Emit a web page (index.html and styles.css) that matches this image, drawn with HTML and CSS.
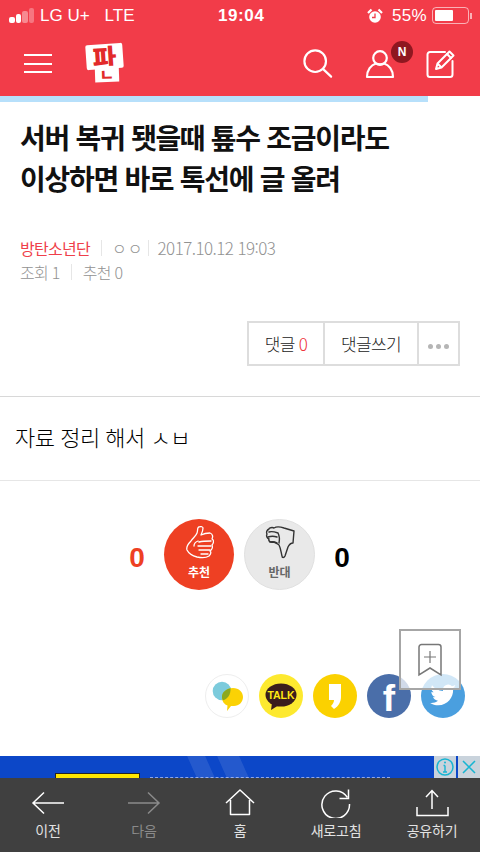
FILE: index.html
```html
<!DOCTYPE html>
<html lang="ko">
<head>
<meta charset="utf-8">
<title>판</title>
<link rel="stylesheet" href="styles.css">
</head>
<body>
<div class="page">
  <header class="header">
    <div class="status">
      <div class="status-left">
        <span class="signal"><i class="bar b1"></i><i class="bar b2"></i><i class="bar b3"></i><i class="bar b4"></i></span>
        <span class="carrier">LG U+</span>
        <span class="lte">LTE</span>
      </div>
      <div class="clock">19:04</div>
      <div class="status-right">
        <svg class="alarm" width="16" height="16" viewBox="0 0 16 16"><circle cx="8" cy="9" r="5.800" fill="#fff"/><path d="M8 5.500V9.500H5" fill="none" stroke="#f23c49" stroke-width="1.300"/><path d="M1 5 4.500 1.500M15 5l-3.500-3.500" stroke="#fff" stroke-width="2.200"/></svg>
        <span class="pct">55%</span>
        <span class="battery"><i class="level"></i></span>
        <i class="nub"></i>
      </div>
    </div>
    <div class="nav">
      <div class="nav-left">
        <div class="burger"><i></i><i></i><i></i></div>
        <div class="logo">
          <span class="logo-top">파</span>
          <span class="logo-bot">ㄴ</span>
        </div>
      </div>
      <div class="nav-right">
        <svg class="ic-search" width="30" height="30" viewBox="0 0 32 32" fill="none" stroke="#fff" stroke-width="2.300" stroke-linecap="round"><circle cx="13" cy="13" r="11.500"/><path d="M21.500 21.500l8.500 8"/></svg>
        <div class="user">
          <svg width="30" height="30" viewBox="0 0 30 30" fill="none" stroke="#fff" stroke-width="2.200" stroke-linejoin="round"><circle cx="15" cy="9" r="6.800"/><path d="M2 28c0-7 4-12 9-13.500 2.500 1 5.500 1 8 0 5 1.500 9 6.500 9 13.500z"/></svg>
          <span class="badge">N</span>
        </div>
        <svg class="ic-edit" width="30" height="30" viewBox="0 0 30 30" fill="none" stroke="#fff" stroke-width="2" stroke-linejoin="round" stroke-linecap="round"><path d="M19 3H4a2.500 2.500 0 0 0-2.500 2.500v20A2.500 2.500 0 0 0 4 28h20a2.500 2.500 0 0 0 2.500-2.500V12"/><path d="M10 20l1.500-5.500L23.500 2.500l4 4-12 12z"/><path d="M21 5l4 4M12 15l3 3"/></svg>
      </div>
    </div>
  </header>
  <div class="progress"><div class="progress-fill"></div></div>

  <main>
    <h1 class="title">서버 복귀 됏을때 툪수 조금이라도<br>이상하면 바로 톡선에 글 올려</h1>

    <div class="meta">
      <div class="meta-row">
        <span class="author">방탄소년단</span>
        <i class="sep"></i>
        <span class="nick">ㅇㅇ</span>
        <i class="sep"></i>
        <span class="date">2017.10.12 19:03</span>
      </div>
      <div class="meta-row">
        <span>조회 1</span>
        <i class="sep"></i>
        <span>추천 0</span>
      </div>
    </div>

    <div class="actions">
      <div class="btns">
        <div class="btn btn-reply">댓글 <em>0</em></div>
        <div class="btn btn-write">댓글쓰기</div>
        <div class="btn btn-more"><i></i><i></i><i></i></div>
      </div>
    </div>

    <div class="body-text">자료 정리 해서 ㅅㅂ</div>

    <div class="vote">
      <span class="count up">0</span>
      <div class="circle red">
        <svg width="30" height="33" viewBox="0 0 30 33" fill="none" stroke="#fff" stroke-width="1.300" stroke-linejoin="round" stroke-linecap="round"><path d="M15 1c-2 0-1 4-2 6-1 3-4 5-6 8-3 3-5 6-4 9 2 4 6 6 10 7 5 1 9 1 12-1 2-2 2-4 1-5 2-1 3-4 2-6 2-2 2-5 0-6 1-2 1-5-2-6-3 0-7 1-9 2 1-2 2-5 2-7 0-1-2-2-4-1z"/><path d="M14 15c-3 1-4 3-4 5M15 16c4-1 8-1 12-1M14 20c4 0 9 0 13 0M15 24h11M17 28h7"/></svg>
        <span class="circle-label">추천</span>
      </div>
      <div class="circle grey">
        <svg width="30" height="33" viewBox="0 0 30 33" fill="none" stroke="#333" stroke-width="1.400" stroke-linejoin="round" stroke-linecap="round"><path d="M9 2c3-2 7-1 10 0l10 3-1 12c-2 0-4 2-5 4l-3 9c-1 2-3 2-3 0-1-4-1-7-3-11-3-2-4-3-6-3-2 1-5-1-4-3-2-1-3-3-2-5-1-2 0-4 2-5 0-1 3-2 5-1z"/><path d="M4 6c3-1 6 0 9 1M3 11c3-1 6-1 9 0M5 16c3-1 5 0 7 1M13 7c1 2 2 5 1 10"/></svg>
        <span class="circle-label">반대</span>
      </div>
      <span class="count down">0</span>
    </div>

    <div class="share">
      <span class="sns sns-bubble">
        <svg width="44" height="44" viewBox="0 0 44 44"><circle cx="17" cy="17" r="9.300" fill="#7ccbdc"/><path d="M28 14c6 0 10 4 10 9s-4 9-9 9h-3l-4 5 .5-5.500c-3-1-5.500-4-5.500-8 0-5 5-9.500 11-9.500z" fill="#fbd205"/><path d="M18 26.300c-1-1-1-2.300-1-3.800 0-4 3-7 8.500-8.300.5 6-3 11-7.500 12.100z" fill="#8ba81f"/></svg>
      </span>
      <span class="sns sns-talk">
        <svg width="44" height="44" viewBox="0 0 44 44"><ellipse cx="22" cy="21" rx="15.500" ry="11.500" fill="#3a1d1d"/><path d="M13 29l-1 7 8-5z" fill="#3a1d1d"/></svg>
        <span class="talk-text">TALK</span>
      </span>
      <span class="sns sns-story">
        <svg width="44" height="44" viewBox="0 0 44 44"><path d="M16 10h12v13c0 4-2 9-7 12l-3-3c2-2 3-4 3-6h-5z" fill="#fff"/></svg>
      </span>
      <span class="sns sns-fb">f</span>
      <span class="sns sns-tw">
        <svg width="44" height="44" viewBox="0 0 44 44"><path d="M35 13c-1 .6-2 1-3 1 1-.7 2-1.700 2.300-3-1 .6-2 1-3.300 1.300a5.300 5.300 0 0 0-9 4.800c-4.500-.2-8.500-2.400-11-5.800-1.400 2.400-.7 5.500 1.600 7-.8 0-1.600-.2-2.300-.6 0 2.600 1.800 4.800 4.200 5.300-.8.200-1.600.2-2.400 0 .7 2.100 2.600 3.600 4.900 3.700-2.200 1.700-5 2.500-7.800 2.200 2.300 1.500 5.100 2.300 8 2.300 9.700 0 15.200-8.200 14.900-15.500 1-.8 1.900-1.700 2.900-2.900z" fill="#fff"/></svg>
      </span>
      <div class="bookmark">
        <svg width="26" height="34" viewBox="0 0 26 34" fill="none" stroke="#777" stroke-width="1.500"><path d="M2 32V4a2.500 2.500 0 0 1 2.500-2.500h17A2.500 2.500 0 0 1 24 4v28l-11-7z"/><path d="M13 8v12M7 14h12" stroke-width="1.200"/></svg>
      </div>
    </div>

    <div class="ad">
      <div class="ad-yellow"></div>
      <div class="ad-line"></div>
      <div class="ad-shine s1"></div>
      <div class="ad-shine s2"></div>
      <div class="ad-controls">
        <span class="ad-ctl"><svg width="20" height="20" viewBox="0 0 20 20" fill="none" stroke="#17b5d2" stroke-width="1.500"><circle cx="10" cy="10" r="8"/><path d="M10 8.500V15M8 15h4M8.500 8.500H10" stroke-width="1.400"/><circle cx="10" cy="5.500" r="1" fill="#17b5d2" stroke="none"/></svg></span>
        <span class="ad-ctl"><svg width="18" height="18" viewBox="0 0 18 18" fill="none" stroke="#17b5d2" stroke-width="1.500"><path d="M3 3l12 12M15 3L3 15"/></svg></span>
      </div>
    </div>
  </main>

  <nav class="toolbar">
    <div class="tool">
      <svg width="34" height="24" viewBox="0 0 34 24" fill="none" stroke="#fff" stroke-width="1.500"><path d="M33 12H2M13 1.500 2 12l11 10.500"/></svg>
      <span>이전</span>
    </div>
    <div class="tool off">
      <svg width="34" height="24" viewBox="0 0 34 24" fill="none" stroke="#8a8a8a" stroke-width="1.500"><path d="M1 12h31M21 1.500 32 12 21 22.500"/></svg>
      <span>다음</span>
    </div>
    <div class="tool">
      <svg width="30" height="28" viewBox="0 0 30 28" fill="none" stroke="#fff" stroke-width="1.500" stroke-linejoin="round"><path d="M1 14 15 1l14 13M5.500 11v14.500h19V11"/></svg>
      <span>홈</span>
    </div>
    <div class="tool">
      <svg width="30" height="30" viewBox="0 0 30 30" fill="none" stroke="#fff" stroke-width="1.500"><path d="M26.500 9.500A13.800 13.800 0 1 0 28.500 16"/><path d="M27.500 1.500v9h-9"/></svg>
      <span>새로고침</span>
    </div>
    <div class="tool">
      <svg width="34" height="28" viewBox="0 0 34 28" fill="none" stroke="#fff" stroke-width="1.500"><path d="M17 20V2M11 8l6-6.500L23 8M2 18v8.500h31V18"/></svg>
      <span>공유하기</span>
    </div>
  </nav>
</div>
</body>
</html>
```

FILE: styles.css
```css
* { box-sizing: border-box; }
html, body { margin: 0; padding: 0; }
body { font-family: "Noto Sans CJK KR", "Noto Sans", sans-serif; background: #fff; }
i, em { font-style: normal; display: block; }
.page { position: relative; width: 480px; height: 852px; overflow: hidden; background: #fff; }

.header { height: 96px; background: #f23c49; color: #fff; }
.status { position: relative; height: 31px; display: flex; justify-content: space-between; align-items: center; padding: 0 8px 0 9px; font-family: "Liberation Sans", sans-serif; font-size: 17px; }
.status-left { display: flex; align-items: center; }
.signal { display: flex; align-items: flex-end; gap: 1px; height: 15px; width: 31px; }
.bar { width: 5.500px; border-radius: 2px; background: #fff; }
.b1 { height: 6px; }
.b2 { height: 9px; }
.b3 { height: 12px; opacity: .4; }
.b4 { height: 15px; opacity: .3; }
.carrier { margin-right: 15px; }
.clock { position: absolute; left: 218px; top: 6px; font-weight: 700; font-size: 17px; letter-spacing: .6px; }
.status-right { display: flex; align-items: center; }
.alarm { margin-right: 9px; }
.pct { margin-right: 5px; font-size: 17px; letter-spacing: .3px; }
.battery { width: 37px; height: 17px; border: 1px solid rgba(255,255,255,.6); border-radius: 4px; padding: 2px; display: block; }
.level { width: 18px; height: 100%; background: #fff; border-radius: 1px; }
.nub { width: 2px; height: 6px; background: rgba(255,255,255,.6); margin-left: 1px; }

.nav { height: 65px; display: flex; justify-content: space-between; align-items: center; padding: 0 24px; }
.nav-left { display: flex; align-items: center; gap: 34px; }
.burger { width: 28px; display: flex; flex-direction: column; gap: 6.500px; }
.burger i { height: 2px; background: #fff; }
.logo { position: relative; width: 38px; height: 38px; margin-top: -1px; }
.logo-top, .logo-bot { position: absolute; display: flex; align-items: center; justify-content: center; background: #fff; color: #e22a2a; font-weight: 900; }
.logo-top { left: 0; top: 0; width: 37px; height: 25px; font-size: 26px; line-height: 25px; transform: rotate(-4deg); border-radius: 2px; }
.logo-bot { left: 9px; top: 22px; width: 24px; height: 16px; font-size: 16px; line-height: 16px; transform: rotate(-2deg); }
.nav-right { display: flex; align-items: center; }
.ic-search { margin-right: 32px; }
.user { position: relative; width: 30px; height: 30px; margin-right: 31px; }
.badge { position: absolute; left: 26px; top: -8px; width: 22px; height: 22px; border-radius: 50%; background: #8f1720; color: #fff; font: 700 12px/22px "Liberation Sans", sans-serif; text-align: center; }

.progress { height: 6px; background: #fff; }
.progress-fill { width: 428px; height: 100%; background: #b7e0fb; }

.title { margin: 0; padding: 15px 20px 0; font-size: 28px; line-height: 41px; font-weight: 700; letter-spacing: -1.300px; color: #111; }

.meta { margin-top: 37px; padding: 0 20px; font-size: 16px; line-height: 24px; font-weight: 300; color: #929292; letter-spacing: -.7px; }
.meta-row { display: flex; align-items: center; }
.meta-row .sep { width: 1px; height: 16px; background: #e6e6e6; margin: 0 11px; }
.author { color: #ef3f4b; font-weight: 400; }
.nick { letter-spacing: 1px; margin: 0 -7px 0 -1px; }
.date { font-size: 17px; letter-spacing: -.56px; margin-left: -2px; }

.actions { margin-top: 37px; padding: 0 20px 30px; display: flex; justify-content: flex-end; border-bottom: 1px solid #d8d8d8; }
.btns { display: flex; height: 45px; border: 2px solid #ddd; }
.btn { display: flex; align-items: center; justify-content: center; font-size: 17px; font-weight: 300; color: #222; letter-spacing: -.7px; }
.btn + .btn { border-left: 2px solid #ddd; }
.btn em { color: #ef3038; margin-left: 4px; }
.btn-reply { width: 74px; }
.btn-write { width: 94px; }
.btn-more { width: 41px; gap: 3px; padding-top: 5px; }
.btn-more i { width: 5px; height: 5px; border-radius: 50%; background: #b5b5b5; }

.body-text { height: 84px; padding: 0 0 6px 15px; display: flex; align-items: center; font-size: 22px; font-weight: 300; color: #000; letter-spacing: -.5px; border-bottom: 1px solid #e6e6e6; }

.vote { margin-top: 38px; display: flex; align-items: center; height: 71px; padding-left: 122px; }
.count { width: 30px; padding-top: 6px; text-align: center; font: 700 28px "Liberation Sans", sans-serif; }
.up { color: #ee4023; }
.down { color: #000; }
.circle { height: 71px; border-radius: 50%; display: flex; flex-direction: column; align-items: center; padding-top: 7px; }
.red { width: 70px; background: #ee4023; margin: 0 10px 0 12px; }
.grey { width: 71px; background: #e9e9e9; border: 1px solid #e0e0e0; margin-right: 12px; padding-top: 6px; }
.circle svg { display: block; }
.circle-label { font-size: 12px; line-height: 14px; font-weight: 700; margin-top: 6px; }
.red .circle-label { color: #fff; }
.grey .circle-label { color: #666; }

.share { position: relative; margin-top: 84px; height: 44px; display: flex; justify-content: flex-end; gap: 10px; padding-right: 15px; }
.sns { position: relative; width: 44px; height: 44px; border-radius: 50%; display: block; }
.sns svg { display: block; }
.sns-bubble { background: #fff; border: 1px solid #eee; }
.sns-bubble svg { margin: -1px; }
.sns-talk { background: #fde92f; }
.talk-text { position: absolute; left: 0; right: 0; top: 13px; text-align: center; color: #ffe812; font: 700 10.500px/16px "Liberation Sans", sans-serif; }
.sns-story { background: #fbd100; }
.sns-fb { background: #4a6ea9; color: #fff; font: 700 37px/50px "Liberation Sans", sans-serif; text-align: center; }
.sns-tw { background: #4a9fdf; }
.bookmark { position: absolute; left: 399px; top: -45px; width: 62px; height: 61px; background: rgba(255,255,255,.75); border: 2px solid #a6a6a6; display: flex; align-items: center; justify-content: center; }

.ad { position: relative; margin-top: 38px; height: 22px; background: #0c47c8; overflow: hidden; }
.ad-yellow { position: absolute; left: 55px; top: 17px; width: 85px; height: 10px; background: #ffe600; border: 1px solid #222; }
.ad-line { position: absolute; left: 150px; top: 21px; width: 240px; height: 1px; border-top: 1px dashed #8fa8e6; }
.ad-shine { position: absolute; top: 0; height: 22px; background: rgba(255,255,255,.1); transform: skewX(24deg); }
.ad-shine.s1 { left: 192px; width: 18px; }
.ad-shine.s2 { left: 222px; width: 22px; }
.ad-controls { position: absolute; right: 0; top: 0; display: flex; gap: 2px; }
.ad-ctl { width: 22px; height: 22px; background: #c9d3dc; display: flex; align-items: center; justify-content: center; }

.toolbar { position: absolute; left: 0; right: 0; bottom: 0; height: 74px; background: #404040; display: grid; grid-template-columns: repeat(5, 96px); }
.tool { display: flex; flex-direction: column; align-items: center; height: 74px; padding-top: 10px; color: #e2e2e2; font-size: 14px; }
.tool svg { height: 30px; display: block; }
.tool span { margin-top: 2px; line-height: 20px; letter-spacing: -.2px; }
.off { color: #8a8a8a; }
```
